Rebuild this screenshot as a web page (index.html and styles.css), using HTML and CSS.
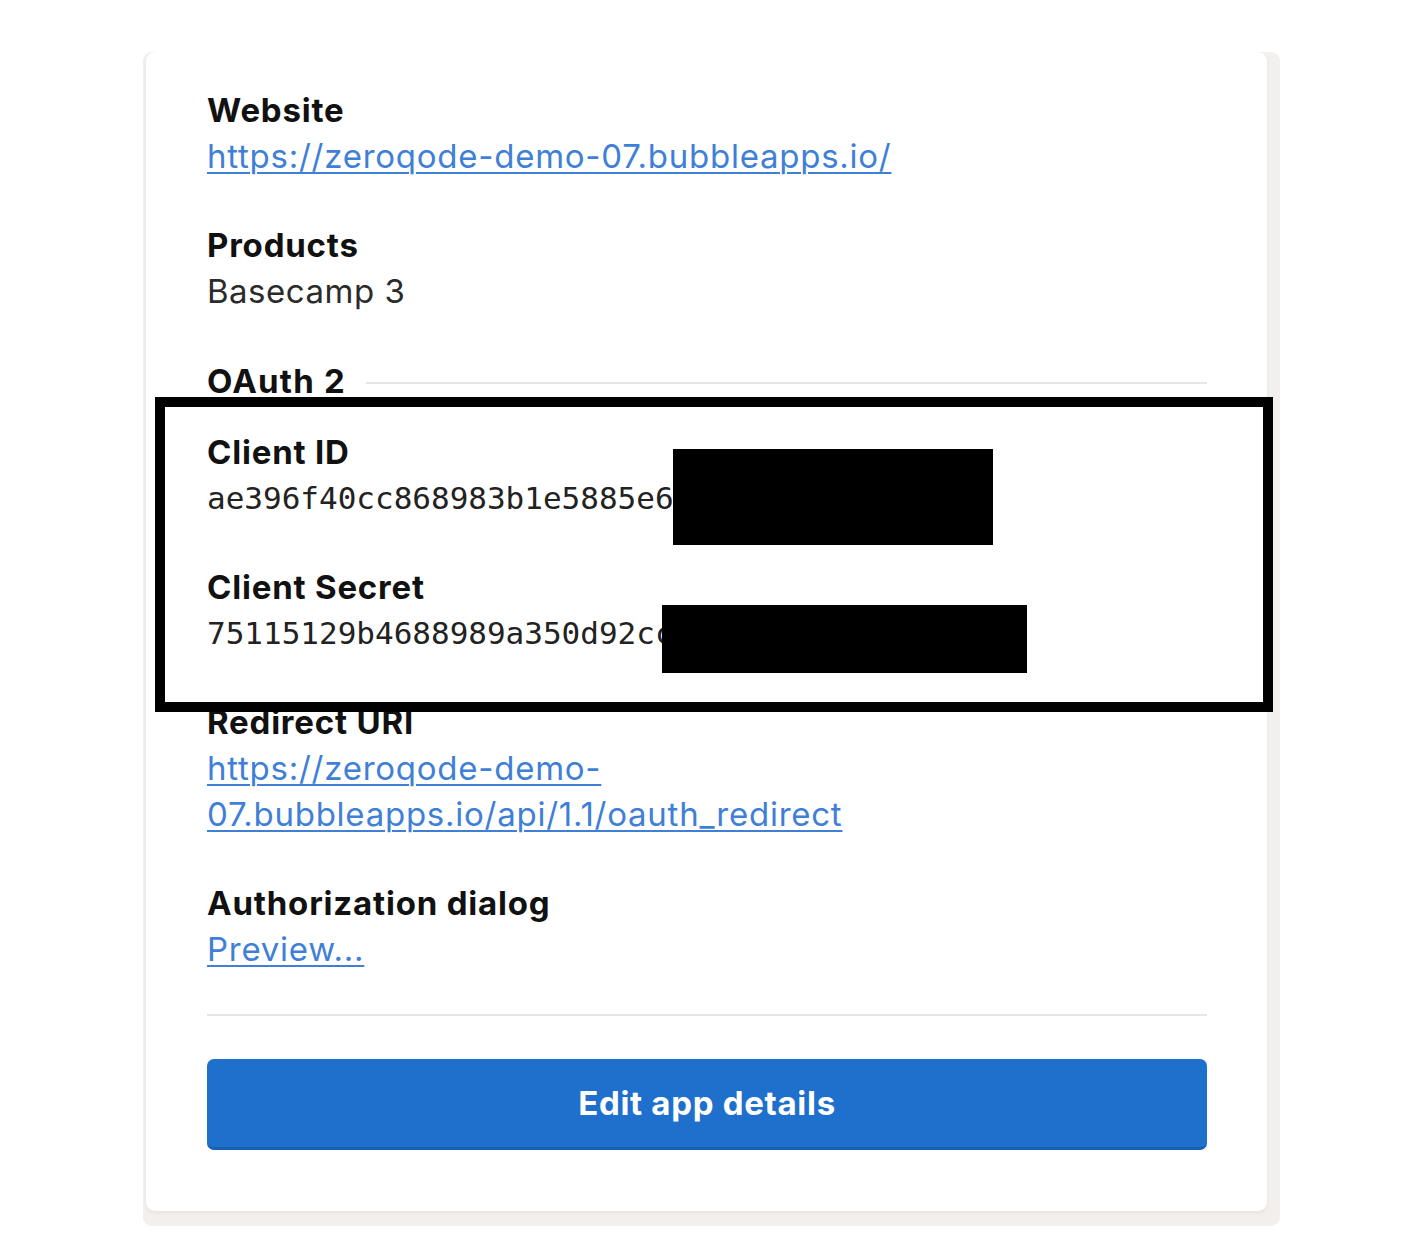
FILE: index.html
```html
<!DOCTYPE html>
<html lang="en">
<head>
    <meta charset="UTF-8">
    <title>App details</title>
    <link rel="stylesheet" href="styles.css">
</head>
<body>
    <div class="frame">
        <div class="card">
            <div class="field">
                <div class="label">Website</div>
                <a class="link" href="#">https://zeroqode-demo-07.bubbleapps.io/</a>
            </div>

            <div class="field">
                <div class="label">Products</div>
                <div class="value">Basecamp 3</div>
            </div>

            <div class="section-title">
                <span>OAuth 2</span>
                <span class="rule"></span>
            </div>

            <div class="field field-tight">
                <div class="label">Client ID</div>
                <div class="mono">ae396f40cc868983b1e5885e6</div>
                <span class="redact redact-id"></span>
            </div>

            <div class="field">
                <div class="label">Client Secret</div>
                <div class="mono">75115129b4688989a350d92cc</div>
                <span class="redact redact-secret"></span>
            </div>

            <div class="field">
                <div class="label">Redirect URI</div>
                <a class="link" href="#">https://zeroqode-demo-<br>07.bubbleapps.io/api/1.1/oauth_redirect</a>
            </div>

            <div class="field">
                <div class="label">Authorization dialog</div>
                <a class="link" href="#">Preview...</a>
            </div>

            <hr class="divider">

            <button class="btn">Edit app details</button>

            <!-- highlight box -->
            <div class="highlight"></div>
        </div>
    </div>
</body>
</html>
```

FILE: styles.css
```css
body {
    margin: 0;
    padding: 52px 0 15px;
    background: #fff;
    font-family: Inter, "Liberation Sans", Arial, sans-serif;
    color: #1b1b1b;
}
.frame {
    width: 1137px;
    box-sizing: border-box;
    margin-left: 143px;
    padding: 0 13px 15px 3px;
    background: #f2efed;
    border-radius: 9px;
}
.card {
    position: relative;
    padding: 35px 60px 61px 61px;
    background: #fff;
    border-radius: 9px;
    box-shadow: 0 2px 4px rgba(0,0,0,0.05);
}
.field {
    position: relative;
    margin-top: 43px;
    font-size: 33px;
    line-height: 46px;
}
.field:first-child {
    margin-top: 0;
}
.field-tight {
    margin-top: 25px;
}
.label {
    font-weight: 700;
    letter-spacing: 0.8px;
    color: #111;
}
.value {
    letter-spacing: 0.5px;
    color: #2b2b2b;
}
.link {
    color: #3f7fd8;
    letter-spacing: 0.75px;
    text-decoration: underline;
    text-decoration-thickness: 2px;
    text-underline-offset: 4px;
}
.mono {
    font-family: "DejaVu Sans Mono", "Liberation Mono", monospace;
    font-size: 31px;
    color: #222;
}
.section-title {
    display: flex;
    align-items: center;
    gap: 20px;
    margin-top: 44px;
    font-size: 33px;
    line-height: 46px;
    font-weight: 700;
    letter-spacing: 1.2px;
    color: #111;
}
.section-title .rule {
    flex: 1;
    height: 2px;
    margin-top: 4px;
    background: #e6e6e6;
}
.redact {
    position: absolute;
    background: #000;
}
.redact-id {
    left: 466px;
    top: 20px;
    width: 320px;
    height: 96px;
}
.redact-secret {
    left: 455px;
    top: 41px;
    width: 365px;
    height: 68px;
}
.divider {
    margin: 42px 0 43px;
    border: none;
    height: 2px;
    background: #e6e6e6;
}
.btn {
    display: block;
    width: 100%;
    height: 91px;
    border: none;
    border-bottom: 3px solid #1b5fb3;
    border-radius: 7px;
    background: #1f70cc;
    color: #fff;
    font-family: Inter, "Liberation Sans", Arial, sans-serif;
    font-size: 33px;
    font-weight: 700;
    letter-spacing: 0.7px;
    cursor: pointer;
}
.highlight {
    position: absolute;
    left: 9px;
    top: 345px;
    width: 1118px;
    height: 315px;
    box-sizing: border-box;
    border: 10px solid #000;
}
```
